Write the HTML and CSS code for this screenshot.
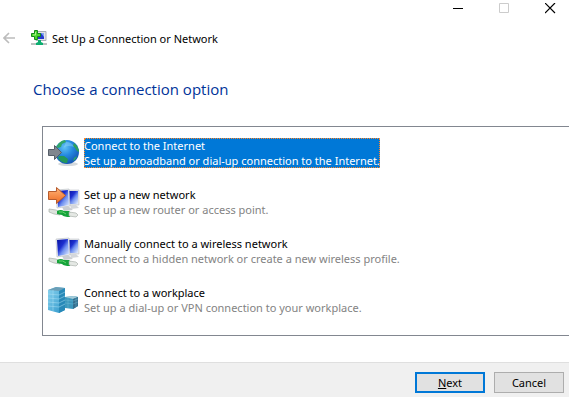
FILE: index.html
```html
<!DOCTYPE html>
<html lang="en">
<head>
<meta charset="utf-8">
<title>Set Up a Connection or Network</title>
<link rel="stylesheet" href="styles.css">
</head>
<body>
<svg class="defs" aria-hidden="true">
  <defs>
    <linearGradient id="screen" x1="0" y1="0" x2="1" y2="1"><stop offset="0" stop-color="#0812a0"/><stop offset=".4" stop-color="#1c2fd0"/><stop offset=".6" stop-color="#6f90f0"/><stop offset="1" stop-color="#e8f2ff"/></linearGradient>
    <radialGradient id="ocean" cx=".4" cy=".3" r=".7"><stop offset="0" stop-color="#62c2f4"/><stop offset=".5" stop-color="#2488e0"/><stop offset="1" stop-color="#1557b4"/></radialGradient>
    <linearGradient id="orange" x1="0" y1="0" x2="0" y2="1"><stop offset="0" stop-color="#ffb57a"/><stop offset="1" stop-color="#ee6a20"/></linearGradient>
    <linearGradient id="tower" x1="0" y1="0" x2="1" y2="1"><stop offset="0" stop-color="#8bd4f0"/><stop offset="1" stop-color="#2b94c8"/></linearGradient>
    <g id="computers">
      <path d="M19 4h12v15H20z" fill="#e4e7ea" stroke="#c0c4c9" stroke-width=".6"/>
      <path d="M20 5h10v13H20z" fill="url(#screen)"/>
      <path d="M22 19h6l3 3-8 1z" fill="#d4d7db"/>
      <path d="M8 4l13-1 1 17-13 2z" fill="#eef0f2" stroke="#b5bac0" stroke-width=".6"/>
      <path d="M9 5l11-1 1 15-11 2z" fill="url(#screen)"/>
      <path d="M14 21l6-1 5 4-9 1z" fill="#c9cdd2"/>
      <path d="M1 23l7 1 4 2v3l-6-1-5-2z" fill="#dde3dd" stroke="#9da69f" stroke-width=".6"/>
      <path d="M9 25q4-2 7 0h5l2 2-1 4q-6 0-8-2l-5-1z" fill="#16a33b"/>
      <path d="M11 26q4-1 7 2" fill="none" stroke="#63d46b"/>
      <path d="M21 26l7 1 2 2-2 2-7-1z" fill="#e4e8e4" stroke="#a1a8a2" stroke-width=".6"/>
    </g>
  </defs>
</svg>
<main class="wizard">
  <div class="titlebar">
    <button class="caption" aria-label="Minimize"><svg width="11" height="11"><path d="M0 5.500h10" stroke="#000"/></svg></button>
    <button class="caption" aria-label="Maximize" disabled><svg width="11" height="11"><path d="M.5.5h9v9h-9z" fill="none" stroke="#ccc"/></svg></button>
    <button class="caption" aria-label="Close"><svg width="11" height="11"><path d="M0 0l10 10M10 0L0 10" stroke="#000" stroke-width="1.200"/></svg></button>
  </div>
  <header class="header">
    <button class="back" aria-label="Back" disabled><svg width="13" height="12"><path d="M12 6H1M6 1L1 6l5 5" fill="none" stroke="#bcbcbc" stroke-width="1.600"/></svg></button>
    <svg class="app-icon" width="16" height="16" aria-hidden="true">
      <path d="M5 1.500h10v9H5z" fill="#e0e3e7" stroke="#a8adb5"/>
      <path d="M6 3h7v6H6z" fill="#2539cf"/><path d="M10 3h3v4z" fill="#83a5f5"/>
      <path d="M0 13h16v2H0z" fill="#b9c2c0"/><path d="M7 10h3v2l2 1v2H5v-2l2-1z" fill="#0cae70"/>
      <path d="M3.500.5h3v3h3v3h-3v3h-3v-3h-3v-3h3z" fill="#4bd52c" stroke="#138b1a"/>
      <path d="M4.500 2v3H2" fill="none" stroke="#a8f487"/>
    </svg>
    <span class="window-name">Set Up a Connection or Network</span>
  </header>
  <h1 class="heading">Choose a connection option</h1>
  <div class="options" role="listbox" aria-label="Connection options">
    <button class="option selected" role="option" aria-selected="true">
      <svg class="icon" width="32" height="32" aria-hidden="true">
        <ellipse cx="20" cy="27" rx="10" ry="2" fill="#d5d9dc"/>
        <circle cx="19" cy="15" r="12" fill="url(#ocean)"/>
        <path d="M11 6q3-3 6-3l1 2-4 2-1 3-3 1-2-1z" fill="#32a568"/>
        <path d="M26 6q5 4 5 9l-2-1-2-3-2-2z" fill="#2ba05e"/>
        <path d="M11 19l5 0 4 3-1 4q-6 0-9-5z" fill="#23985a"/>
        <path d="M26 21l3-2q-1 4-4 5z" fill="#2ba46a"/>
        <path d="M18 5q6 0 8 5-5-2-10 0z" fill="#9fdefa" opacity=".4"/>
        <path d="M.5 12.500h6v-4l7 7-7 7v-4h-6z" fill="#80868e" stroke="#565e69"/>
      </svg>
      <span class="label"><span class="name">Connect to the Internet</span><span class="detail">Set up a broadband or dial-up connection to the Internet.</span></span>
    </button>
    <button class="option" role="option" aria-selected="false">
      <svg class="icon" width="32" height="32" aria-hidden="true"><use href="#computers"/><path d="M.5 5.500h8v-4l9 8-9 8v-4h-8z" fill="url(#orange)" stroke="#b65c2e"/></svg>
      <span class="label"><span class="name">Set up a new network</span><span class="detail">Set up a new router or access point.</span></span>
    </button>
    <button class="option" role="option" aria-selected="false">
      <svg class="icon" width="32" height="32" aria-hidden="true"><use href="#computers"/></svg>
      <span class="label"><span class="name">Manually connect to a wireless network</span><span class="detail">Connect to a hidden network or create a new wireless profile.</span></span>
    </button>
    <button class="option" role="option" aria-selected="false">
      <svg class="icon" width="32" height="32" aria-hidden="true">
        <path d="M17 13l9-1 4 1v9l-5 3-8-1z" fill="#3c98bd"/><path d="M17 13l9-1 4 1-5 2z" fill="#a4cbd8"/>
        <path d="M25 15l5-2v9l-5 3z" fill="#356e8d"/><path d="M17 16l8 1 5-2M17 19l8 1 5-2M20 13v11M28 14v9" fill="none" stroke="#75bfd9" stroke-width=".4"/>
        <path d="M0 6l8-3 9 1v22l-6 3-11-3z" fill="url(#tower)"/><path d="M0 6l8-3 9 1-6 3z" fill="#6b9fb7"/>
        <path d="M11 7l6-3v22l-6 3z" fill="#2789b8"/>
        <path d="M0 10l11 1 6-3M0 14l11 1 6-3M0 18l11 1 6-3M0 22l11 1 6-3M5 6v21" fill="none" stroke="#aee3f5" stroke-width=".5"/>
      </svg>
      <span class="label"><span class="name">Connect to a workplace</span><span class="detail">Set up a dial-up or VPN connection to your workplace.</span></span>
    </button>
  </div>
  <footer class="footer">
    <button class="action default"><u>N</u>ext</button>
    <button class="action">Cancel</button>
  </footer>
</main>
</body>
</html>
```

FILE: styles.css
```css
* { box-sizing: border-box; }
body { margin: 0; background: #fff; color: #000; font: 11px/15px "Noto Sans", "Open Sans", sans-serif; overflow-x: hidden; }
button { font: inherit; color: inherit; margin: 0; padding: 0; border: 0; background: none; }
svg { display: block; flex: none; }
.defs { position: absolute; width: 0; height: 0; }
.titlebar { display: flex; justify-content: flex-end; gap: 35px; height: 16px; padding: 3px 13px 0 0; }
.caption { width: 11px; height: 11px; }
.header { display: flex; align-items: center; height: 44px; padding-left: 3px; }
.app-icon { margin: 0 5px 0 15px; }
.heading { margin: 0; padding: 16px 33px 24px; color: #003399; font-family: "Open Sans", "Noto Sans", sans-serif; font-size: 15px; line-height: 26px; font-weight: 400; }
.options { display: flex; flex-direction: column; gap: 17px; margin-left: 42px; padding: 10px 5px 19px; border: 1px solid #828790; border-right: 0; }
.option { display: flex; align-items: center; gap: 4px; height: 32px; text-align: left; white-space: nowrap; }
.name, .detail { display: block; }
.detail { color: #838383; }
.selected .label { background: #0078d7; color: #fff; outline: 1px dotted #ff8728; outline-offset: -1px; }
.selected .detail { color: #fff; }
.footer { display: flex; justify-content: flex-end; gap: 9px; margin-top: 26px; padding: 9px 5px 4px; background: #f0f0f0; border-top: 1px solid #dfdfdf; }
.action { width: 70px; height: 21px; border: 1px solid #adadad; background: #e1e1e1; }
.default { border: 2px solid #0078d7; }
```
